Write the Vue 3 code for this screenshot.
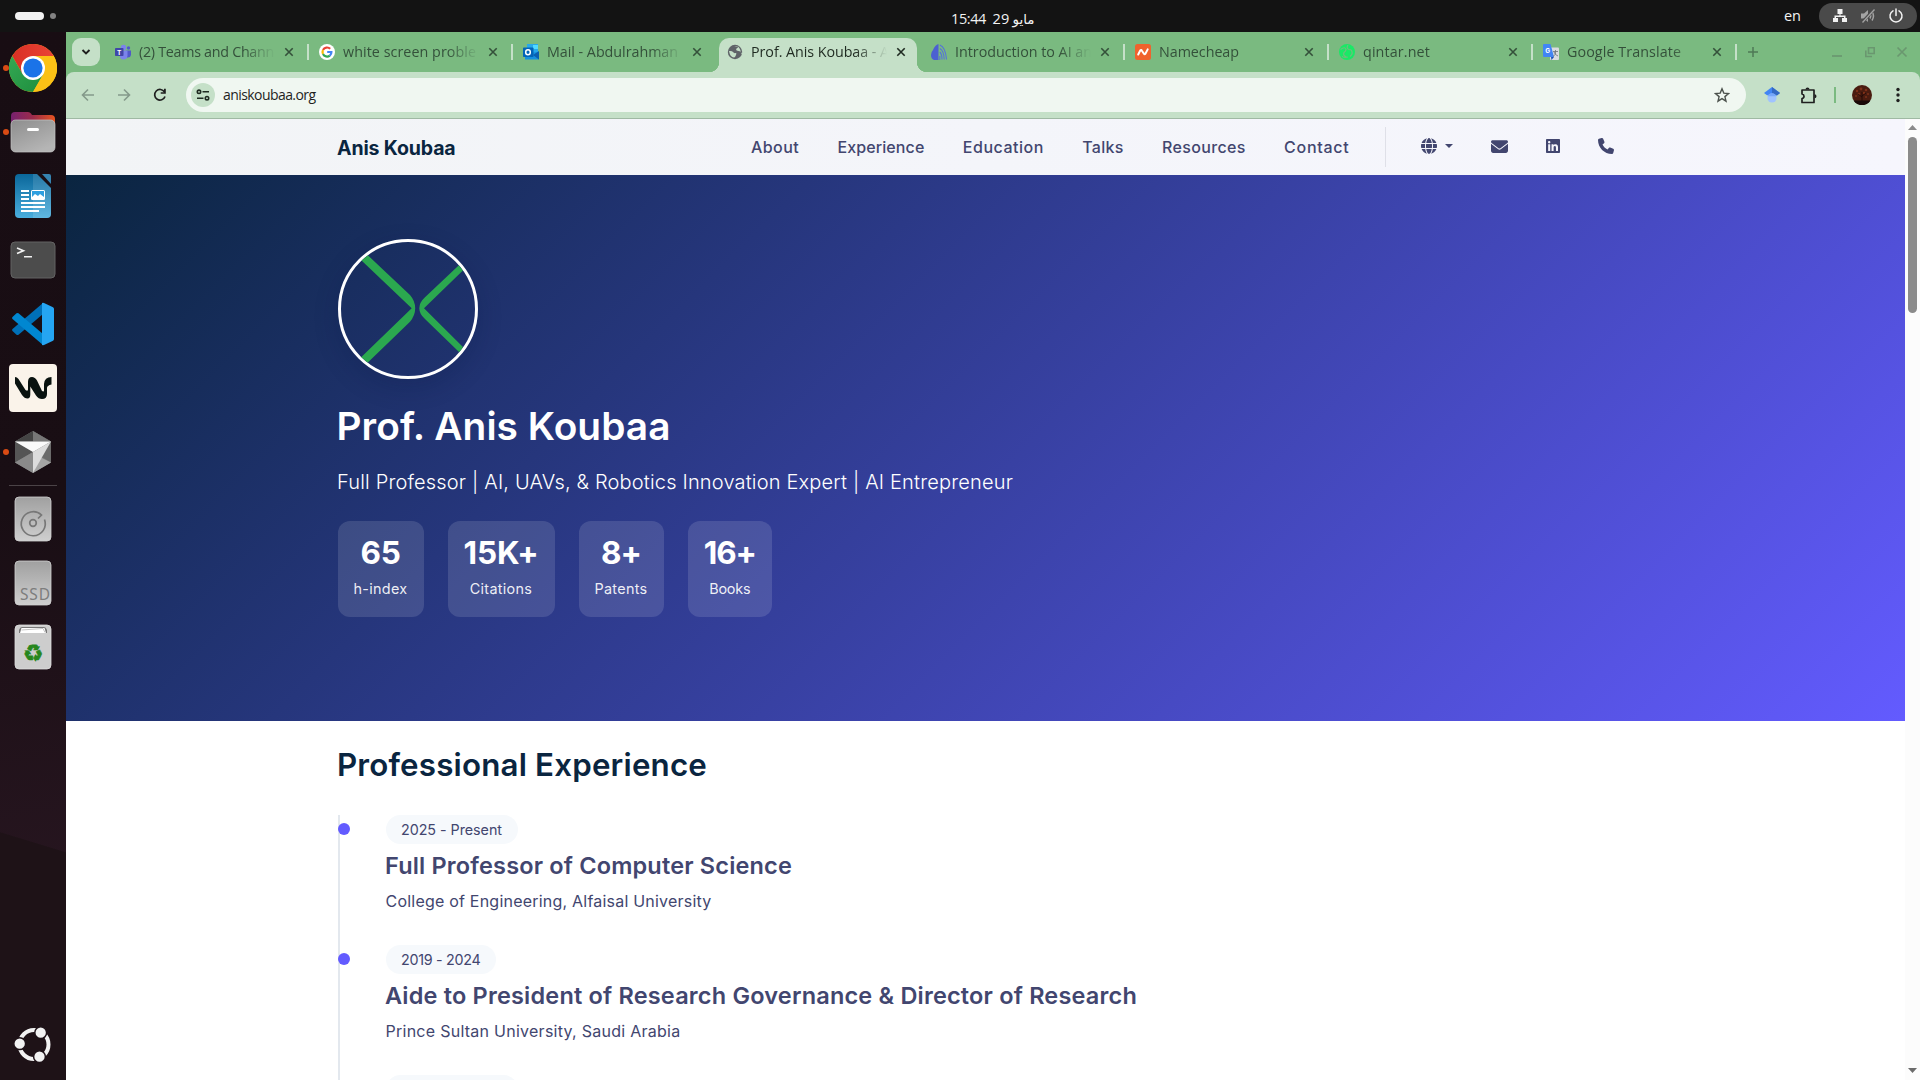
<script setup>
// Adjusts tracking so that a run of text spans the given width in pixels.
const vFit = {
  mounted(el, { value }) {
    if (!value) return
    const range = document.createRange()
    range.selectNodeContents(el)
    const width = range.getBoundingClientRect().width
    el.style.letterSpacing = `${(value - width) / el.textContent.length}px`
  },
}

const tabs = [
  { icon: 'teams', title: '(2) Teams and Chann', width: 135 },
  { icon: 'google', title: 'white screen proble', width: 133 },
  { icon: 'outlook', title: 'Mail - Abdulrahman', width: 131 },
  { icon: 'globe', title: 'Prof. Anis Koubaa - A', width: 138, active: true },
  { icon: 'brain', title: 'Introduction to AI an', width: 137 },
  { icon: 'namecheap', title: 'Namecheap', width: 80 },
  { icon: 'qintar', title: 'qintar.net', width: 67 },
  { icon: 'translate', title: 'Google Translate', width: 114 },
]

const links = [
  { label: 'About', width: 48 },
  { label: 'Experience', width: 87 },
  { label: 'Education', width: 81 },
  { label: 'Talks', width: 41.5 },
  { label: 'Resources', width: 83.5 },
  { label: 'Contact', width: 65.5 },
]

const stats = [
  { value: '65', label: 'h-index', vw: 40, lw: 54 },
  { value: '15K+', label: 'Citations', vw: 75, lw: 62.5 },
  { value: '8+', label: 'Patents', vw: 40, lw: 53 },
  { value: '16+', label: 'Books', vw: 52, lw: 41 },
]

const jobs = [
  { period: '2025 - Present', pw: 101, title: 'Full Professor of Computer Science', tw: 407, place: 'College of Engineering, Alfaisal University', dw: 326 },
  { period: '2019 - 2024', pw: 79.5, title: 'Aide to President of Research Governance & Director of Research', tw: 752, place: 'Prince Sultan University, Saudi Arabia', dw: 295 },
]
</script>

<template>
  <div class="desktop">
    <header class="topbar">
      <div class="workspaces"><i class="ws-current"></i><i class="ws-dot"></i></div>
      <div class="clock">
        <span v-fit="35">15:44</span><span v-fit="17" class="day">29</span><span v-fit="25" class="month">مايو</span>
      </div>
      <div class="tray">
        <span class="lang">en</span>
        <div class="tray-pill">
          <svg width="16" height="16" viewBox="0 0 16 16"><path d="M5.500 1h5v5h-2v1.500h5V10H15v4h-5v-4h2V9H4v1h2v4H1v-4h1.500V7.500h5V6h-2z" fill="#f2f2f2"/></svg>
          <svg width="16" height="16" viewBox="0 0 16 16" fill="none" stroke="#a3a3a3"><path d="M1 5.500h3L8 2v12L4 10.500H1z" fill="#a3a3a3" stroke="none"/><path d="M10 5.500q1.500 2.500 0 5M12 3.500q3 4.500 0 9" stroke-width="1.500"/><path d="M14.500 1 2 14.500" stroke="#4a4a4a" stroke-width="3"/><path d="M14.500 1.500 2.500 14.500" stroke-width="1.300"/></svg>
          <svg width="16" height="16" viewBox="0 0 16 16" fill="none" stroke="#f2f2f2" stroke-width="1.500" stroke-linecap="round"><path d="M5 2.800a6 6 0 1 0 6 0M8 1v6.500"/></svg>
        </div>
      </div>
    </header>

    <div class="workarea">
      <aside class="dock">
        <div class="dock-item running">
          <svg width="48" height="48" viewBox="0 0 48 48">
            <defs>
              <linearGradient id="cr" x1="0" y1="0" x2="1" y2="0"><stop stop-color="#d93025"/><stop offset="1" stop-color="#ea4335"/></linearGradient>
              <linearGradient id="cg" x1="0" y1="0" x2="1" y2="1"><stop stop-color="#34a853"/><stop offset="1" stop-color="#1e8e3e"/></linearGradient>
            </defs>
            <circle cx="24" cy="24" r="24" fill="#fbc116"/>
            <path d="M24 12h20.800A24 24 0 0 0 3.200 12l10.400 18z" fill="url(#cr)"/>
            <path d="M34.400 30 24 48A24 24 0 0 1 3.200 12l10.400 18L24 36z" fill="url(#cg)"/>
            <path d="M24 12h20.800A24 24 0 0 1 24 48l10.400-18z" fill="#fbc116"/>
            <circle cx="24" cy="24" r="12" fill="#fff"/><circle cx="24" cy="24" r="9.600" fill="#1a73e8"/>
          </svg>
        </div>
        <div class="dock-item running">
          <svg width="48" height="48" viewBox="0 0 48 48">
            <defs>
              <linearGradient id="fo" x1="0" x2="1"><stop stop-color="#77216f"/><stop offset=".5" stop-color="#9c2c4b"/><stop offset="1" stop-color="#e95420"/></linearGradient>
              <linearGradient id="fg" x1="0" x2=".6" y1="0" y2="1"><stop stop-color="#8d8d8d"/><stop offset="1" stop-color="#b5b5b5"/></linearGradient>
            </defs>
            <path d="M2 8q0-4 4-4h13q2 0 3 1.500L23 7h19q4 0 4 4v10H2z" fill="url(#fo)"/>
            <rect x="2" y="12" width="44" height="32" rx="4.500" fill="url(#fg)" stroke="#c4c4c4" stroke-width=".7"/>
            <rect x="18" y="20" width="12" height="3" rx="1.500" fill="#fff"/>
          </svg>
        </div>
        <div class="dock-item">
          <svg width="48" height="48" viewBox="0 0 48 48">
            <defs><linearGradient id="wr" x1="0" x2="0" y1="0" y2="1"><stop stop-color="#0a679a"/><stop offset="1" stop-color="#4aaede"/></linearGradient></defs>
            <path d="M10 2h18l14 14v26q0 4-4 4H10q-4 0-4-4V6q0-4 4-4z" fill="url(#wr)"/>
            <path d="M24 2h4l14 14v26q0 4-4 4H24z" fill="#fff" opacity=".12"/>
            <path d="M33 2h7q2 0 2 2v8z" fill="#3583b0"/>
            <g fill="#fff"><path d="M12 18h8v2h-8zM12 22h8v2h-8zM12 26h8v2h-8zM12 30h24v2H12zM12 34h24v2H12zM12 38h18v2H12z"/><rect x="22" y="18" width="14" height="10" rx="1.500"/></g>
            <rect x="23" y="19" width="12" height="8" fill="#2e9fe0"/><path d="M23 27v-2l3-3 3 2 2-2 4 3v2z" fill="#fff"/>
          </svg>
        </div>
        <div class="dock-item">
          <svg width="48" height="48" viewBox="0 0 48 48">
            <rect x="2" y="6" width="44" height="36" rx="4" fill="#4c4c4c" stroke="#636363" stroke-width="1"/>
            <path d="m8 12 6.500 2.700L8 17.500M15 20.700h8" fill="none" stroke="#f2f2f2" stroke-width="1.600"/>
          </svg>
        </div>
        <div class="dock-item">
          <svg width="48" height="48" viewBox="0 0 48 48">
            <path d="M34 3v11L9.500 34.700q-1 .6-2 0L3.500 31q-1-1 0-2z" fill="#0070b8"/>
            <path d="M34 45V34L9.500 13.300q-1-.6-2 0L3.500 17q-1 1 0 2z" fill="#0087d1"/>
            <path d="M33 3q1-.3 2 0l9 4.300q1 .6 1 1.700v30q0 1.100-1 1.700L35 45q-1 .3-2 0z" fill="#25a5f2"/>
          </svg>
        </div>
        <div class="dock-item">
          <svg width="48" height="48" viewBox="0 0 48 48">
            <rect width="48" height="48" rx="4" fill="#faf3ea"/>
            <path d="M6 13v6.500l7 11.500q2.500 3.500 5.500 3.500 2.800 0 2.800-4v-8l5.700 9q2.500 3.500 6 3.500 5 0 5-5v-6q0-2.500 4.500-3.500v-7.500q-7 0-7.500 7v6.500q0 1.500-2 .5L28 16.500Q26 13 23 13q-4 0-4 5v7.500q0 2-2.500.5L9.500 15Q8 13 6 13z" fill="#09120f"/>
          </svg>
        </div>
        <div class="dock-item running">
          <svg width="48" height="48" viewBox="0 0 48 48">
            <path d="M24 3 6 13.500v21L24 45l18-10.500v-21z" fill="#777"/>
            <path d="M24 3 6 13.500h36z" fill="#444"/><path d="M24 3v10.500h18z" fill="#777"/>
            <path d="M6 13.500v21L24 24z" fill="#555"/><path d="M6 34.500 24 24v21z" fill="#8a8a8a"/>
            <path d="M42 13.500v21L32 28z" fill="#6b6b6b"/><path d="M42 34.500 31 29l-7 16z" fill="#a5a5a5"/>
            <path d="M6 13.500h36L24 24z" fill="#fafafa"/><path d="M42 13.500 24 45V24z" fill="#dcdcdc"/>
          </svg>
        </div>
        <hr class="dock-rule" />
        <div class="dock-item">
          <svg width="48" height="48" viewBox="0 0 48 48">
            <defs><linearGradient id="dk" x1="0" x2="0" y1="0" y2="1"><stop stop-color="#a0a0a0"/><stop offset="1" stop-color="#cfcfcf"/></linearGradient></defs>
            <rect x="6" y="2" width="36" height="44" rx="4" fill="url(#dk)" stroke="#d2d2d2" stroke-width=".8"/>
            <g fill="none" stroke="#777" stroke-width="1.700"><path d="M35.500 24.500A12 12 0 1 1 32.500 20L29 23.500"/><circle cx="24" cy="28" r="3.300"/></g>
          </svg>
        </div>
        <div class="dock-item">
          <svg width="48" height="48" viewBox="0 0 48 48">
            <rect x="6" y="2" width="36" height="44" rx="4" fill="url(#dk)" stroke="#d2d2d2" stroke-width=".8"/>
            <text x="11" y="40.500" textLength="30" font-family="Noto Sans, sans-serif" font-size="15.500" fill="#7d7d7d">SSD</text>
          </svg>
        </div>
        <div class="dock-item">
          <svg width="48" height="48" viewBox="0 0 48 48">
            <rect x="6" y="2" width="36" height="44" rx="4" fill="#cdcdcd" stroke="#dedede" stroke-width=".8"/>
            <path d="M10 10V7q1-3 3-3h22q2 0 3 3v3z" fill="#777"/><path d="m11 10 1.500-5h23l1.500 5z" fill="#fff"/><path d="M12.500 7 34 5.500l2 4" fill="none" stroke="#aaa" stroke-width=".7"/>
            <text x="24" y="37.500" text-anchor="middle" font-family="DejaVu Sans, sans-serif" font-size="23" fill="#26861c" stroke="#26861c" stroke-width=".7">♻</text>
          </svg>
        </div>
        <div class="dock-item apps">
          <svg width="48" height="48" viewBox="0 0 48 48">
            <circle cx="25" cy="24.500" r="14.500" fill="none" stroke="#f2f2f2" stroke-width="4"/>
            <g fill="#f2f2f2" stroke="#1e1218" stroke-width="1.500"><circle cx="10.700" cy="23.700" r="5.900"/><circle cx="31.700" cy="12.700" r="5.900"/><circle cx="30.500" cy="36.700" r="5.900"/></g>
          </svg>
        </div>
      </aside>

      <main class="browser">
        <div class="tabstrip">
          <button class="tab-search"><svg width="10" height="8" viewBox="0 0 10 8"><path d="m1.500 2 3.500 3.500L8.500 2" fill="none" stroke="#1f1f1f" stroke-width="1.900"/></svg></button>
          <div v-for="(tab, i) in tabs" :key="tab.icon" class="tab" :class="{ active: tab.active, plain: i === 2 }">
            <svg class="favicon" width="16" height="16" viewBox="0 0 16 16">
              <g v-if="tab.icon === 'teams'"><circle cx="8.500" cy="3.500" r="2.700" fill="#7b83eb"/><circle cx="13.500" cy="4" r="1.700" fill="#5059c9"/><path d="M11 6.500h5v4.500q-.5 2.500-3 2.500h-2z" fill="#5059c9"/><path d="M5 6.500h7.500V12q-.5 3.500-4 3.500T5 12z" fill="#7b83eb"/><rect y="4" width="8.500" height="8" rx=".8" fill="#4046a8"/><text x="4.250" y="10.500" text-anchor="middle" font-size="6.500" font-weight="700" font-family="Inter, sans-serif" fill="#fff">T</text></g>
              <g v-else-if="tab.icon === 'google'" fill="none" stroke-width="2.200"><circle cx="8" cy="8" r="8" fill="#fff"/><path d="M11.200 4.800A4.500 4.500 0 0 0 4 6" stroke="#ea4335"/><path d="M4 6a4.500 4.500 0 0 0 0 4" stroke="#fbbc05"/><path d="M4 10a4.500 4.500 0 0 0 6.800 1.600" stroke="#34a853"/><path d="M10.800 11.600A4.500 4.500 0 0 0 12.400 8H8.200" stroke="#4285f4"/></g>
              <g v-else-if="tab.icon === 'outlook'"><path d="M4 0h11v9H4z" fill="#28a8ea"/><path d="M10 1h5v4h-5z" fill="#50d9ff"/><path d="M2 15.500V9l14-1v7.500z" fill="#1490df"/><path d="m10 11 6-4v8.500z" fill="#0a5fb0"/><rect y="3.500" width="10.500" height="9.500" rx=".8" fill="#0364b8"/><ellipse cx="5" cy="8.200" rx="2.300" ry="2.500" fill="none" stroke="#fff" stroke-width="1.500"/></g>
              <g v-else-if="tab.icon === 'globe'"><circle cx="8" cy="8" r="7.200" fill="#5f6368"/><path d="M2 7q3-.5 4 1t2.500 1 .5 2-2 2.500q-4-.5-5-6.500zM7 2h3l1 1.500L9 5q0 2 2.500 2t3 2-.5 1q0-5-3-7.500" fill="#c5e0c8"/></g>
              <g v-else-if="tab.icon === 'brain'" fill="none" stroke="#5573d8" stroke-width="1.100"><path d="M7.500 0v16H3q-3-1-3-5 0-3 2-5 2-5 5.500-6z" fill="#4c60d2" stroke="none"/><path d="M8.800 1q6 2.500 6.700 14.500M8.800 4.500q4 2 4.400 11M8.800 8q2.200 2 2.200 7.500M8.800 12v4"/></g>
              <g v-else-if="tab.icon === 'namecheap'"><rect width="16" height="16" rx="2.500" fill="#f0622d"/><path d="m3.200 10.500 2-4q1-1 1.700.2l2 3q.8 1 1.500 0l2.300-4.300" fill="none" stroke="#fff" stroke-width="2" stroke-linecap="round"/></g>
              <g v-else-if="tab.icon === 'qintar'"><circle cx="8" cy="8" r="8" fill="#1ae866"/><g fill="none" stroke="#6fbe7c" stroke-width="1.200"><path d="M1.500 5.500Q6 2 7 5.500q0 1.500-2 3-1.500 3 2.500 4.500M9 1q-2 3.500 1 4.500 3 0 3 2.500 1 2-2 4.500M3 12.500q3 1.500 6 .5"/></g></g>
              <g v-else><rect x="7" y="3.500" width="9" height="12.500" rx="1" fill="#dadce0"/><path d="M8 13h3l-2.500 3z" fill="#1a4fb5"/><path d="M1 0h6.500l3.500 13H1q-1 0-1-1V1q0-1 1-1z" fill="#4285f4"/><text x="4.600" y="8.800" text-anchor="middle" font-size="6.500" font-weight="700" font-family="Inter, sans-serif" fill="#fff">G</text><path d="M10 7.500h5M12.500 6v1.500q1 3-2.500 5M11 8q1 3 4 4" fill="none" stroke="#6b7177" stroke-width=".8"/></g>
            </svg>
            <span class="tab-title"><span v-fit="tab.width">{{ tab.title }}</span></span>
            <svg class="tab-close" width="10" height="10" viewBox="0 0 10 10"><path d="m1.300 1.300 7.400 7.400M8.700 1.300 1.300 8.700" stroke="currentColor" stroke-width="1.600"/></svg>
          </div>
          <svg class="new-tab" width="12" height="12" viewBox="0 0 12 12"><path d="M6 1v10M1 6h10" stroke="#4f7a55" stroke-width="1.500"/></svg>
          <div class="window-buttons">
            <svg width="12" height="12" viewBox="0 0 12 12"><path d="M1 10h10" stroke="#6a976f" stroke-width="1.700"/></svg>
            <svg width="12" height="12" viewBox="0 0 12 12" fill="none" stroke="#6a976f" stroke-width="1.600"><path d="M4.500 1.800h5.700v5.700H4.500zM1.800 4.500v6H8"/></svg>
            <svg width="12" height="12" viewBox="0 0 12 12"><path d="m1.500 1.500 9 9M10.500 1.500l-9 9" stroke="#6a976f" stroke-width="1.700"/></svg>
          </div>
        </div>

        <div class="toolbar">
          <svg class="nav-btn" width="14" height="14" viewBox="0 0 14 14" fill="none" stroke="#84998a" stroke-width="1.600"><path d="M13 7H2M7 1.500 1.500 7 7 12.500"/></svg>
          <svg class="nav-btn" width="14" height="14" viewBox="0 0 14 14" fill="none" stroke="#84998a" stroke-width="1.600"><path d="M1 7h11M7 1.500 12.500 7 7 12.500"/></svg>
          <svg class="nav-btn" width="14" height="14" viewBox="0 0 14 14"><path d="M12 8.500A5.300 5.300 0 1 1 11.500 4" fill="none" stroke="#1f1f1f" stroke-width="1.700"/><path d="M12.800.8v5H7.700V4.200H11V.8z" fill="#1f1f1f"/></svg>
          <div class="omnibox">
            <span class="site-info"><svg width="14" height="12" viewBox="0 0 14 12" fill="none" stroke="#1f2a21" stroke-width="1.600"><circle cx="3" cy="2.800" r="1.700"/><path d="M6.500 2.800H13M1 9.200h6.500"/><circle cx="11" cy="9.200" r="1.700"/></svg></span>
            <span v-fit="92.500" class="url">aniskoubaa.org</span>
            <svg class="star" width="16" height="16" viewBox="0 0 16 16"><path d="m8 1.800 1.800 4.300 4.700.4-3.600 3.100 1.100 4.600-4-2.500-4 2.500 1.100-4.600-3.600-3.100 4.700-.4z" fill="none" stroke="#4c524d" stroke-width="1.400"/></svg>
          </div>
          <svg class="scholar" width="16" height="16" viewBox="0 0 16 16"><path d="M8 0 0 6l3 2.300h10L16 6z" fill="#4285f4"/><path d="m8 0 8 6-3 2.500L8 7z" fill="#356ac3"/><circle cx="8" cy="11" r="4.600" fill="#a0c3ff"/><path d="M3.700 9.300a4.600 4.600 0 0 1 8.600 0z" fill="#76a7fa"/></svg>
          <svg class="puzzle" width="17" height="17" viewBox="0 0 17 17"><path d="M2 3h12v12.500H2v-4q2-.3 2-2.200T2 7z" fill="none" stroke="#1f1f1f" stroke-width="1.700" stroke-linejoin="round"/><path d="M5.500 2.500a2 2 0 0 1 4 0zM14.500 7.300a2 2 0 0 1 0 4z" fill="#1f1f1f"/></svg>
          <i class="toolbar-rule"></i>
          <svg class="avatar" width="20" height="20" viewBox="0 0 20 20"><circle cx="10" cy="10" r="10" fill="#4a1c10"/><g fill="#7d3018"><circle cx="5" cy="6" r="1.200"/><circle cx="9" cy="4" r="1.400"/><circle cx="14" cy="5" r="1.300"/><circle cx="7" cy="9" r="1.300"/><circle cx="12" cy="8" r="1.300"/><circle cx="16" cy="9" r="1"/><circle cx="4" cy="11" r="1"/><circle cx="14" cy="12" r="1"/></g><path d="M10 7v9M10 11l4-3M10 12 6 9" stroke="#1c0805" stroke-width=".8"/><path d="M1.500 15.500h17a10 10 0 0 1-17 0z" fill="#190807"/></svg>
          <svg class="kebab" width="4" height="16" viewBox="0 0 4 16" fill="#1f1f1f"><circle cx="2" cy="2.500" r="1.700"/><circle cx="2" cy="8" r="1.700"/><circle cx="2" cy="13.500" r="1.700"/></svg>
        </div>

        <div class="viewport">
          <div class="page">
            <nav class="site-nav">
              <span v-fit="118.500" class="brand">Anis Koubaa</span>
              <div class="links"><a v-for="l in links" :key="l.label" v-fit="l.width">{{ l.label }}</a></div>
              <div class="social">
                <svg class="s-globe" width="16" height="16" viewBox="0 0 512 512"><path d="M352 256c0 22.200-1.200 43.600-3.300 64H163.300c-2.200-20.400-3.300-41.800-3.300-64s1.200-43.600 3.300-64H348.700c2.200 20.400 3.300 41.800 3.300 64zm28.800-64H503.900c5.300 20.500 8.100 41.900 8.100 64s-2.800 43.500-8.100 64H380.800c2.100-20.600 3.200-42 3.200-64s-1.100-43.400-3.200-64zm112.600-32H376.700c-10-63.900-29.800-117.400-55.300-151.600c78.300 20.700 142 77.500 171.900 151.600zm-149.100 0H167.700c6.100-36.400 15.500-68.600 27-94.700c10.500-23.600 22.200-40.700 33.500-51.500C239.400 3.200 248.700 0 256 0s16.600 3.200 27.800 13.800c11.300 10.800 23 27.900 33.500 51.500c11.600 26 20.900 58.200 27 94.700zm-209 0H18.600C48.600 85.900 112.200 29.100 190.600 8.400C165.100 42.600 145.300 96.100 135.300 160zM8.100 192H131.200c-2.100 20.600-3.200 42-3.200 64s1.100 43.400 3.200 64H8.100C2.800 299.500 0 278.100 0 256s2.800-43.500 8.100-64zM194.700 446.600c-11.600-26-20.900-58.200-27-94.600H344.300c-6.100 36.400-15.500 68.600-27 94.600c-10.500 23.600-22.200 40.700-33.500 51.500C272.600 508.800 263.300 512 256 512s-16.600-3.200-27.800-13.800c-11.300-10.800-23-27.900-33.500-51.500zM135.300 352c10 63.900 29.800 117.400 55.300 151.600C112.200 482.900 48.600 426.100 18.600 352H135.300zm358.100 0c-30 74.100-93.600 130.900-171.900 151.600c25.500-34.200 45.200-87.700 55.300-151.600H493.400z"/></svg>
                <svg class="s-caret" width="8" height="4" viewBox="0 0 8 4"><path d="M0 0h8L4 4z"/></svg>
                <svg class="s-mail" width="17" height="17" viewBox="0 0 512 512"><path d="M48 64C21.500 64 0 85.500 0 112c0 15.100 7.100 29.300 19.200 38.400L236.800 313.600c11.400 8.500 27 8.500 38.400 0L492.800 150.400c12.100-9.100 19.200-23.300 19.200-38.400c0-26.500-21.500-48-48-48H48zM0 176V384c0 35.300 28.700 64 64 64H448c35.300 0 64-28.700 64-64V176L294.400 339.200c-22.800 17.100-54 17.100-76.800 0L0 176z"/></svg>
                <svg class="s-in" width="14" height="16" viewBox="0 0 448 512"><path d="M416 32H31.900C14.300 32 0 46.500 0 64.300v383.400C0 465.500 14.300 480 31.900 480H416c17.600 0 32-14.500 32-32.300V64.300c0-17.800-14.400-32.300-32-32.300zM135.400 416H69V202.200h66.500V416zm-33.200-243c-21.300 0-38.500-17.300-38.500-38.500S80.900 96 102.200 96c21.200 0 38.500 17.300 38.500 38.500 0 21.300-17.200 38.500-38.500 38.500zm282.100 243h-66.400V312c0-24.800-.5-56.700-34.500-56.700-34.600 0-39.900 27-39.900 54.900V416h-66.400V202.200h63.700v29.200h.9c8.900-16.800 30.600-34.500 62.900-34.500 67.200 0 79.700 44.300 79.700 101.900V416z"/></svg>
                <svg class="s-phone" width="16" height="16" viewBox="0 0 512 512"><path d="M164.900 24.600c-7.700-18.600-28-28.500-47.400-23.200l-88 24C12.100 30.200 0 46 0 64C0 311.400 200.600 512 448 512c18 0 33.800-12.100 38.600-29.500l24-88c5.300-19.400-4.600-39.700-23.200-47.400l-96-40c-16.300-6.800-35.200-2.100-46.300 11.600L304.700 368C234.300 334.700 177.300 277.700 144 207.300L193.300 167c13.700-11.200 18.400-30 11.600-46.300l-40-96z"/></svg>
              </div>
            </nav>

            <section class="hero">
              <div class="portrait">
                <svg width="134" height="134" viewBox="0 0 134 134" fill="#2ba84f">
                  <path d="M17 4 69 53Q74.200 59 74.200 66.300T69 79.700L17 130 9.500 125.500 70.700 66.300 10 8.500z"/>
                  <path d="M134 8 84 55.300Q78.300 60.500 78.300 66.300T84 77L134 125.500V117L83 66.300 134 16.700z"/>
                </svg>
              </div>
              <h1><span v-fit="334">Prof. Anis Koubaa</span></h1>
              <p class="tagline"><span v-fit="676">Full Professor | AI, UAVs, &amp; Robotics Innovation Expert | AI Entrepreneur</span></p>
              <div class="stats">
                <div v-for="s in stats" :key="s.label" class="stat">
                  <strong v-fit="s.vw">{{ s.value }}</strong>
                  <span v-fit="s.lw">{{ s.label }}</span>
                </div>
              </div>
            </section>

            <section class="experience">
              <h2><span v-fit="370">Professional Experience</span></h2>
              <div class="timeline">
                <article v-for="j in jobs" :key="j.title" class="job">
                  <span class="period"><span v-fit="j.pw">{{ j.period }}</span></span>
                  <h3><span v-fit="j.tw">{{ j.title }}</span></h3>
                  <p><span v-fit="j.dw">{{ j.place }}</span></p>
                </article>
                <article class="job"><span class="period next"></span></article>
              </div>
            </section>
          </div>
          <div class="scrollbar">
            <svg width="9" height="5" viewBox="0 0 9 5"><path d="M4.500 0 9 5H0z" fill="#8b8b8b"/></svg>
            <i class="thumb"></i>
            <svg class="down" width="9" height="5" viewBox="0 0 9 5"><path d="M0 0h9L4.500 5z" fill="#6b6b6b"/></svg>
          </div>
        </div>
      </main>
    </div>
  </div>
</template>

<style>
body {
  margin: 0;
  overflow: hidden;
}
</style>

<style scoped>
* {
  box-sizing: border-box;
}
svg {
  display: block;
  flex: none;
}
.desktop {
  width: 1920px;
  height: 1080px;
  overflow: hidden;
  display: flex;
  flex-direction: column;
  background: #131313;
  font-family: "Open Sans", "Noto Sans", sans-serif;
}

/* System bar */
.topbar {
  height: 32px;
  flex: none;
  display: grid;
  grid-template-columns: 951px 1fr auto;
  align-items: center;
  color: #f2f2f2;
  font-size: 14.500px;
}
.workspaces {
  display: flex;
  align-items: center;
  gap: 6px;
  padding-left: 15px;
}
.ws-current {
  width: 29px;
  height: 8px;
  border-radius: 4px;
  background: #f2f2f2;
}
.ws-dot {
  width: 6px;
  height: 6px;
  border-radius: 50%;
  background: #828282;
}
.clock {
  display: flex;
  line-height: 20px;
  padding-top: 6px;
  white-space: nowrap;
}
.day {
  margin-left: 6.500px;
}
.month {
  margin-left: 3px;
  font-family: "DejaVu Sans", sans-serif;
  font-size: 13.500px;
}
.tray {
  display: flex;
  align-items: center;
  padding-right: 3px;
}
.lang {
  line-height: 20px;
}
.tray-pill {
  margin-left: 18px;
  width: 98px;
  height: 26px;
  border-radius: 13px;
  background: #4a4a4a;
  display: flex;
  align-items: center;
  gap: 12px;
  padding-left: 12.500px;
}

/* Dock */
.workarea {
  flex: 1;
  min-height: 0;
  display: flex;
}
.dock {
  width: 66px;
  flex: none;
  padding: 12px 9px;
  display: flex;
  flex-direction: column;
  gap: 16px;
  background: linear-gradient(197deg, transparent 0 784px, #1e1217 785px), linear-gradient(170deg, #180d13 0, #190e14 45%, #26151f 80%);
}
.dock-item {
  position: relative;
  height: 48px;
  flex: none;
}
.running::before {
  content: "";
  position: absolute;
  left: -6px;
  top: 21px;
  width: 6px;
  height: 6px;
  border-radius: 50%;
  background: #d94b14;
}
.dock-rule {
  width: 48px;
  height: 1px;
  margin: -7px 0;
  border: 0;
  flex: none;
  background: #4b4347;
}
.apps {
  margin-top: auto;
}

/* Tabs */
.browser {
  flex: 1;
  min-width: 0;
  display: flex;
  flex-direction: column;
  background: #7aba80;
}
.tabstrip {
  height: 40px;
  flex: none;
  display: flex;
  align-items: center;
  padding-left: 6px;
}
.tab-search {
  width: 28px;
  height: 28px;
  margin-right: 3px;
  padding: 0;
  border: 0;
  border-radius: 9px;
  background: #c5e0c8;
  display: grid;
  place-items: center;
}
.tab {
  position: relative;
  width: 204px;
  height: 34px;
  margin-top: 6px;
  padding: 0 0 6px 12px;
  flex: none;
  display: flex;
  align-items: center;
  color: #34503a;
  font-size: 14.300px;
}
.tab:not(.active):not(.plain)::after {
  content: "";
  position: absolute;
  left: 204px;
  top: 6px;
  width: 2px;
  height: 16px;
  background: #c5e0c8;
}
.tab.active {
  color: #1f2a21;
  isolation: isolate;
}
.tab.active::before {
  content: "";
  position: absolute;
  z-index: -1;
  left: -6px;
  top: 0;
  width: 218px;
  height: 34px;
  background:
    radial-gradient(circle at 0 0, transparent 10px, #c5e0c8 10.500px) left bottom / 10px 10px no-repeat,
    radial-gradient(circle at 100% 0, transparent 10px, #c5e0c8 10.500px) right bottom / 10px 10px no-repeat;
}
.tab.active::after {
  content: "";
  position: absolute;
  z-index: -1;
  left: 4px;
  top: 0;
  width: 198px;
  height: 34px;
  border-radius: 10px 10px 0 0;
  background: #c5e0c8;
}
.tab-title {
  width: 136px;
  margin-left: 8px;
  overflow: hidden;
  white-space: nowrap;
  line-height: 20px;
  mask-image: linear-gradient(90deg, #000 104px, transparent 136px);
}
.tab-close {
  margin-left: 9px;
}
.new-tab {
  margin-left: 12px;
}
.window-buttons {
  margin-left: auto;
  padding-right: 12px;
  display: flex;
  gap: 20.500px;
}

/* Toolbar */
.toolbar {
  height: 47px;
  flex: none;
  display: flex;
  align-items: center;
  padding-left: 15px;
  background: #c5e0c8;
  border-bottom: 1px solid #9fb9a3;
  border-radius: 8px 8px 0 0;
}
.nav-btn {
  margin-right: 22px;
}
.omnibox {
  width: 1560px;
  height: 34px;
  margin-left: -3px;
  flex: none;
  border-radius: 17px;
  background: #f0f7f1;
  display: flex;
  align-items: center;
  padding: 0 16px 0 5px;
}
.site-info {
  width: 24px;
  height: 24px;
  border-radius: 50%;
  background: #c5e0c8;
  display: grid;
  place-items: center;
}
.url {
  margin-left: 8px;
  font-size: 14px;
  line-height: 20px;
  color: #1f1f1f;
  white-space: nowrap;
}
.star {
  margin-left: auto;
}
.scholar {
  margin-left: 18px;
}
.puzzle {
  margin-left: 20px;
}
.toolbar-rule {
  width: 2px;
  height: 16px;
  margin-left: 17px;
  background: #7aba80;
}
.avatar {
  margin-left: 16px;
}
.kebab {
  margin-left: 24px;
}

/* Page */
.viewport {
  flex: 1;
  min-height: 0;
  display: flex;
  background: #fff;
}
.page {
  flex: 1;
  min-width: 0;
  overflow: hidden;
  font-family: Inter, sans-serif;
  color: #42466f;
}
.site-nav {
  height: 56px;
  display: flex;
  align-items: center;
  padding: 0 291px 0 271px;
  background: linear-gradient(90deg, #f2f4f6, #f4f5fa 50%, #f6f6fd);
  white-space: nowrap;
}
.brand {
  padding-top: 1px;
  font-size: 19.500px;
  font-weight: 700;
  color: #0a2540;
}
.links {
  margin-left: auto;
  padding-bottom: 1px;
  display: flex;
  gap: 38.400px;
  font-size: 16px;
  font-weight: 500;
}
.social {
  height: 40px;
  margin-left: 35.500px;
  padding-left: 35px;
  border-left: 1px solid #dfe0e8;
  display: flex;
  align-items: center;
  fill: #42466f;
}
.social svg {
  margin-top: -2px;
}
.s-caret {
  margin-left: 8px;
}
.s-mail,
.s-in,
.s-phone {
  margin-left: 38px;
}

.hero {
  height: 546px;
  padding: 64px 272px 0 271.500px;
  background: linear-gradient(135deg, #0a2540, #635bff);
  color: #fff;
}
.portrait {
  width: 140px;
  height: 140px;
  border: 3px solid #fff;
  border-radius: 50%;
  overflow: hidden;
  box-shadow: 0 8px 24px rgba(10, 25, 70, 0.22);
}
h1,
h2,
h3,
p {
  margin: 0;
  white-space: nowrap;
}
h1 {
  margin: 23px 0 0 -1px;
  font-size: 38.800px;
  line-height: 48px;
  font-weight: 600;
}
.tagline {
  margin: 17px 0 0 -0.500px;
  font-size: 20px;
  line-height: 30px;
  font-weight: 300;
}
.stats {
  display: flex;
  gap: 24px;
  margin-top: 24px;
}
.stat {
  height: 96px;
  min-width: 84.600px;
  padding: 8px 16px 0;
  border-radius: 12px;
  background: rgba(255, 255, 255, 0.125);
  display: flex;
  flex-direction: column;
  align-items: center;
}
.stat strong {
  font-size: 31.500px;
  line-height: 48px;
  font-weight: 700;
}
.stat span {
  margin-top: 1px;
  font-size: 14.400px;
  line-height: 22px;
  color: rgba(255, 255, 255, 0.92);
}

.experience {
  padding: 24px 272px 0 271.500px;
}
h2 {
  margin-left: -0.500px;
  font-size: 31.300px;
  line-height: 40px;
  font-weight: 600;
  color: #0a2540;
}
.timeline {
  margin-top: 30px;
  padding-left: 46px;
  border-left: 2px solid #e3e8ee;
}
.job {
  position: relative;
  height: 130px;
}
.job::before {
  content: "";
  position: absolute;
  left: -48px;
  top: 8px;
  width: 12px;
  height: 12px;
  border-radius: 50%;
  background: #635bff;
}
.period {
  width: fit-content;
  height: 29px;
  padding: 0 15.500px 1px;
  display: flex;
  align-items: center;
  border-radius: 14.500px;
  background: #f6f9fc;
  font-size: 14.300px;
  white-space: nowrap;
}
.next {
  width: 132px;
}
h3 {
  margin: 7px 0 0 -0.500px;
  font-size: 23.500px;
  line-height: 30px;
  font-weight: 600;
}
.job p {
  margin-top: 8px;
  font-size: 16px;
  line-height: 24px;
}

.scrollbar {
  width: 15px;
  display: flex;
  flex-direction: column;
  align-items: center;
  padding: 6px 0 7px;
  background: #fcfcfc;
}
.thumb {
  width: 9px;
  height: 176px;
  margin-top: 7px;
  border-radius: 4.500px;
  background: #8b8b8b;
}
.down {
  margin-top: auto;
}
</style>
